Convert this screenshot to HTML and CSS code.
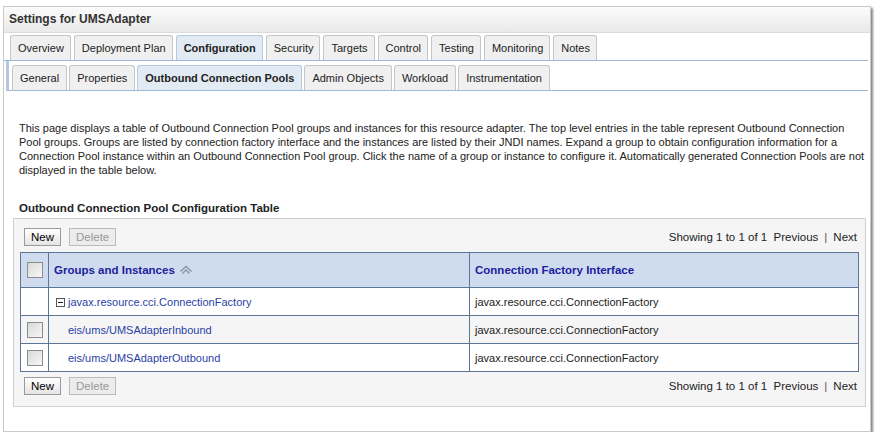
FILE: index.html
```html
<!DOCTYPE html>
<html>
<head>
<meta charset="utf-8">
<link rel="stylesheet" href="styles.css">
</head>
<body>
<div class="panel">
  <div class="panel-header">Settings for UMSAdapter</div>
  <div class="tabs">
    <div class="tab">Overview</div>
    <div class="tab">Deployment Plan</div>
    <div class="tab active">Configuration</div>
    <div class="tab">Security</div>
    <div class="tab">Targets</div>
    <div class="tab">Control</div>
    <div class="tab">Testing</div>
    <div class="tab">Monitoring</div>
    <div class="tab">Notes</div>
  </div>
  <div class="subtabs-wrap">
    <div class="subtabs">
      <div class="tab sub">General</div>
      <div class="tab sub">Properties</div>
      <div class="tab sub active">Outbound Connection Pools</div>
      <div class="tab sub">Admin Objects</div>
      <div class="tab sub">Workload</div>
      <div class="tab sub">Instrumentation</div>
    </div>
  </div>
  <div class="content">
    <p class="intro">This page displays a table of Outbound Connection Pool groups and instances for this resource adapter. The top level entries in the table represent Outbound Connection<br>Pool groups. Groups are listed by connection factory interface and the instances are listed by their JNDI names. Expand a group to obtain configuration information for a<br>Connection Pool instance within an Outbound Connection Pool group. Click the name of a group or instance to configure it. Automatically generated Connection Pools are not<br>displayed in the table below.</p>
    <div class="table-title">Outbound Connection Pool Configuration Table</div>
    <div class="table-box">
      <div class="toolbar">
        <div class="btns">
          <span class="btn">New</span>
          <span class="btn disabled">Delete</span>
        </div>
        <div class="paging">Showing 1 to 1 of 1&nbsp;&nbsp;Previous<span class="sep">|</span>Next</div>
      </div>
      <table class="grid">
        <colgroup>
          <col class="w-chk">
          <col class="w-c1">
          <col>
        </colgroup>
        <thead>
          <tr>
            <th class="chk"><span class="cb"></span></th>
            <th class="c1">Groups and Instances <svg class="sort" width="14" height="10" viewBox="0 0 14 10"><path d="M1.5 6.5 L7 1.5 L12.5 6.5 M3.5 8.5 L7 5 L10.5 8.5" fill="none" stroke="#8a96a8" stroke-width="1.4"/></svg></th>
            <th class="c2">Connection Factory Interface</th>
          </tr>
        </thead>
        <tbody>
          <tr class="odd">
            <td class="chk"></td>
            <td class="c1"><span class="minus"><svg width="9" height="9" viewBox="0 0 9 9"><rect x="0.5" y="0.5" width="8" height="8" fill="#fff" stroke="#555"/><path d="M2 4.5 H7" stroke="#222"/></svg></span><a>javax.resource.cci.ConnectionFactory</a></td>
            <td class="c2">javax.resource.cci.ConnectionFactory</td>
          </tr>
          <tr class="even">
            <td class="chk"><span class="cb"></span></td>
            <td class="c1 indent"><a>eis/ums/UMSAdapterInbound</a></td>
            <td class="c2">javax.resource.cci.ConnectionFactory</td>
          </tr>
          <tr class="odd">
            <td class="chk"><span class="cb"></span></td>
            <td class="c1 indent"><a>eis/ums/UMSAdapterOutbound</a></td>
            <td class="c2">javax.resource.cci.ConnectionFactory</td>
          </tr>
        </tbody>
      </table>
      <div class="toolbar bottom">
        <div class="btns">
          <span class="btn">New</span>
          <span class="btn disabled">Delete</span>
        </div>
        <div class="paging">Showing 1 to 1 of 1&nbsp;&nbsp;Previous<span class="sep">|</span>Next</div>
      </div>
    </div>
  </div>
</div>
</body>
</html>
```

FILE: styles.css
```css
html, body {
  margin: 0;
  padding: 0;
  background: #fff;
}
body {
  font-family: "Liberation Sans", Arial, sans-serif;
  font-size: 11px;
  color: #222;
}
.panel {
  margin: 6px 0 0 3px;
  width: 868px;
  height: 426px;
  border: 1px solid #c9c9c9;
  box-shadow: 2px 2px 2px #8a8a8a;
  background: #fff;
  box-sizing: border-box;
}
.panel-header {
  height: 25px;
  line-height: 24px;
  padding-left: 5px;
  font-weight: bold;
  font-size: 12px;
  color: #333;
  background: linear-gradient(#fbfbfb, #e9e9e9);
  border-bottom: 1px solid #dcdcdc;
}
.tabs {
  display: flex;
  gap: 3px;
  margin-top: 2px;
  padding-left: 6px;
  border-bottom: 1px solid #9cb8d8;
  margin-right: 2px;
}
.tab {
  height: 24px;
  line-height: 24px;
  padding: 0 6px 0 7px;
  background: #f0f0f0;
  border: 1px solid #c6c6c6;
  border-bottom: none;
  border-radius: 3px 3px 0 0;
  color: #222;
  font-size: 11px;
  white-space: nowrap;
}
.tab.sub {
  padding: 0 7px;
}
.tab.active {
  background: #e2ebf4;
  border-color: #b5c9df;
  font-weight: bold;
}
.subtabs-wrap {
  margin-left: 2px;
  margin-right: 2px;
  border-left: 3px solid #b3c8e0;
  border-bottom: 1px solid #9cb8d8;
  padding-top: 4px;
}
.subtabs {
  display: flex;
  gap: 2px;
  padding-left: 3px;
}
.content {
  padding: 0 0 0 9px;
}
.intro {
  margin: 30px 0 0 6px;
  line-height: 14px;
  font-size: 11px;
  color: #222;
  white-space: nowrap;
}
.table-title {
  margin: 25px 0 0 6px;
  font-weight: bold;
  font-size: 11.5px;
  color: #222;
}
.table-box {
  margin-top: 4px;
  width: 853px;
  box-sizing: border-box;
  background: #f5f5f5;
  border: 1px solid #cfcfcf;
  padding: 9px 7px 11px 6px;
}
.toolbar {
  display: flex;
  justify-content: space-between;
  align-items: center;
  padding-left: 4px;
}
.toolbar.bottom {
  margin-top: 5px;
}
.btns {
  display: flex;
  gap: 8px;
}
.btn {
  display: inline-block;
  height: 16px;
  line-height: 16px;
  padding: 0 6px;
  border: 1px solid #9a9a9a;
  background: linear-gradient(#ffffff, #e4e4e4);
  color: #000;
  font-size: 11.5px;
}
.btn.disabled {
  color: #999;
  border-color: #bbb;
  background: #ececec;
}
.paging {
  color: #222;
  font-size: 11.5px;
  padding-right: 1px;
}
.sep {
  margin: 0 6px;
  color: #555;
}
.grid {
  margin-top: 6px;
  width: 839px;
  table-layout: fixed;
  border-collapse: collapse;
  border: 1px solid #5c7697;
  background: #fff;
}
.w-chk {
  width: 28px;
}
.w-c1 {
  width: 421px;
}
.grid th, .grid td {
  border: 1px solid #5c7697;
  text-align: left;
  padding: 0 5px;
  white-space: nowrap;
  overflow: hidden;
}
.grid th {
  height: 34px;
  background: #cfdcef;
  color: #1c1ca0;
  font-weight: bold;
  font-size: 11.5px;
}
.grid td {
  height: 27px;
  font-size: 11px;
  color: #222;
}
.grid tr.even td {
  background: #f5f5f5;
}
.grid .chk {
  padding: 0 5px 0 6px;
}
.cb {
  display: block;
  width: 14px;
  height: 14px;
  border: 1px solid #8c8c8c;
  background: linear-gradient(135deg, #d9d9d9, #f7f7f7);
}
.sort {
  vertical-align: -1px;
  margin-left: 1px;
}
.minus {
  display: inline-block;
  vertical-align: -1px;
  margin-right: 3px;
  margin-left: 2px;
}
.minus svg {
  display: block;
}
.grid a {
  color: #2a3fa6;
  text-decoration: none;
}
.grid td.indent {
  padding-left: 19px;
}
```
